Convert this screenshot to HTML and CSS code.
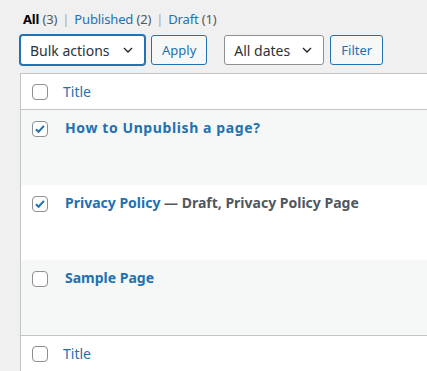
FILE: index.html
```html
<!DOCTYPE html>
<html lang="en">
<head>
    <meta charset="UTF-8">
    <title>Pages</title>
    <link rel="stylesheet" href="styles.css">
</head>
<body>
    <div class="wrap">
        <ul class="subsubsub">
            <li><span class="current">All</span> <span class="count">(3)</span></li>
            <li class="sep">|</li>
            <li><a href="#">Published <span class="count">(2)</span></a></li>
            <li class="sep">|</li>
            <li><a href="#">Draft <span class="count">(1)</span></a></li>
        </ul>

        <div class="tablenav">
            <div class="select focused">
                <span>Bulk actions</span>
                <svg class="chevron" viewBox="0 0 20 20" width="16" height="16"><path d="M5 7.5l5 5 5-5" fill="none" stroke="#1d2327" stroke-width="1.6"/></svg>
            </div>
            <button class="button">Apply</button>
            <div class="select dates">
                <span>All dates</span>
                <svg class="chevron" viewBox="0 0 20 20" width="16" height="16"><path d="M5 7.5l5 5 5-5" fill="none" stroke="#1d2327" stroke-width="1.6"/></svg>
            </div>
            <button class="button">Filter</button>
        </div>

        <div class="list-table">
            <div class="row head">
                <span class="cb"></span>
                <a href="#" class="col-title">Title</a>
            </div>
            <div class="row alt">
                <span class="cb checked"><svg viewBox="0 0 20 20" width="16" height="16"><path d="M4.2 10.2l3.8 3.8 7.6-8.4" fill="none" stroke="#2271b1" stroke-width="3"/></svg></span>
                <strong class="row-title wide"><a href="#">How to Unpublish a page?</a></strong>
            </div>
            <div class="row">
                <span class="cb checked"><svg viewBox="0 0 20 20" width="16" height="16"><path d="M4.2 10.2l3.8 3.8 7.6-8.4" fill="none" stroke="#2271b1" stroke-width="3"/></svg></span>
                <strong class="row-title"><a href="#">Privacy Policy</a> — Draft, Privacy Policy Page</strong>
            </div>
            <div class="row alt">
                <span class="cb"></span>
                <strong class="row-title"><a href="#">Sample Page</a></strong>
            </div>
            <div class="row foot">
                <span class="cb"></span>
                <a href="#" class="col-title">Title</a>
            </div>
        </div>
    </div>
</body>
</html>
```

FILE: styles.css
```css
body {
    margin: 0;
    background: #f0f0f1;
    color: #3c434a;
    font-family: "Noto Sans", "Open Sans", sans-serif;
    font-size: 13px;
    overflow: hidden;
}

a {
    color: #2271b1;
    text-decoration: none;
}

.wrap {
    padding-left: 20px;
    width: 480px;
}

.subsubsub {
    list-style: none;
    margin: 7px 0 0 3px;
    padding: 0;
    display: flex;
    gap: 5px;
    line-height: 24px;
    font-size: 13px;
    letter-spacing: -0.15px;
}

.subsubsub .current {
    color: #000;
    font-weight: 700;
}

.subsubsub .count {
    color: #50575e;
}

.subsubsub .sep {
    color: #a7aaad;
}

.tablenav {
    display: flex;
    align-items: center;
    gap: 6px;
    margin-top: 4px;
    height: 30px;
}

.select {
    box-sizing: border-box;
    height: 30px;
    border: 1px solid #8c8f94;
    border-radius: 3px;
    background: #fff;
    color: #2c3338;
    font-size: 14px;
    display: flex;
    align-items: center;
    justify-content: space-between;
    padding: 0 8px 0 9px;
}

.select.focused {
    width: 125px;
    border-color: #2271b1;
    box-shadow: 0 0 0 1px #2271b1;
}

.select.dates {
    width: 100px;
    margin-left: 11px;
}

.chevron {
    display: block;
}

.button {
    box-sizing: border-box;
    height: 30px;
    padding: 0 10px;
    border: 1px solid #2271b1;
    border-radius: 3px;
    background: #f6f7f7;
    color: #2271b1;
    font-family: inherit;
    font-size: 13px;
}

.list-table {
    margin-top: 8px;
    border: 1px solid #c3c4c7;
    border-right: none;
    background: #fff;
}

.row {
    display: flex;
    align-items: flex-start;
    height: 75px;
    box-sizing: border-box;
    padding: 11px 0 0 11px;
}

.row.alt {
    background: #f6f7f7;
}

.row.head {
    height: 36px;
    align-items: center;
    padding-top: 0;
    border-bottom: 1px solid #c3c4c7;
}

.row.foot {
    height: 36px;
    align-items: center;
    padding-top: 0;
    border-top: 1px solid #c3c4c7;
}

.cb {
    box-sizing: border-box;
    width: 16px;
    height: 16px;
    border: 1px solid #8c8f94;
    border-radius: 4px;
    background: #fff;
    flex: none;
    display: flex;
    align-items: center;
    justify-content: center;
}

.cb svg {
    display: block;
}

.col-title {
    margin-left: 15px;
    font-size: 14px;
}

.row-title {
    margin-left: 17px;
    margin-top: -2px;
    font-size: 14px;
    font-weight: 700;
    line-height: 1.3;
    color: #50575e;
    white-space: nowrap;
}

.row-title.wide {
    letter-spacing: 0.6px;
}
```
